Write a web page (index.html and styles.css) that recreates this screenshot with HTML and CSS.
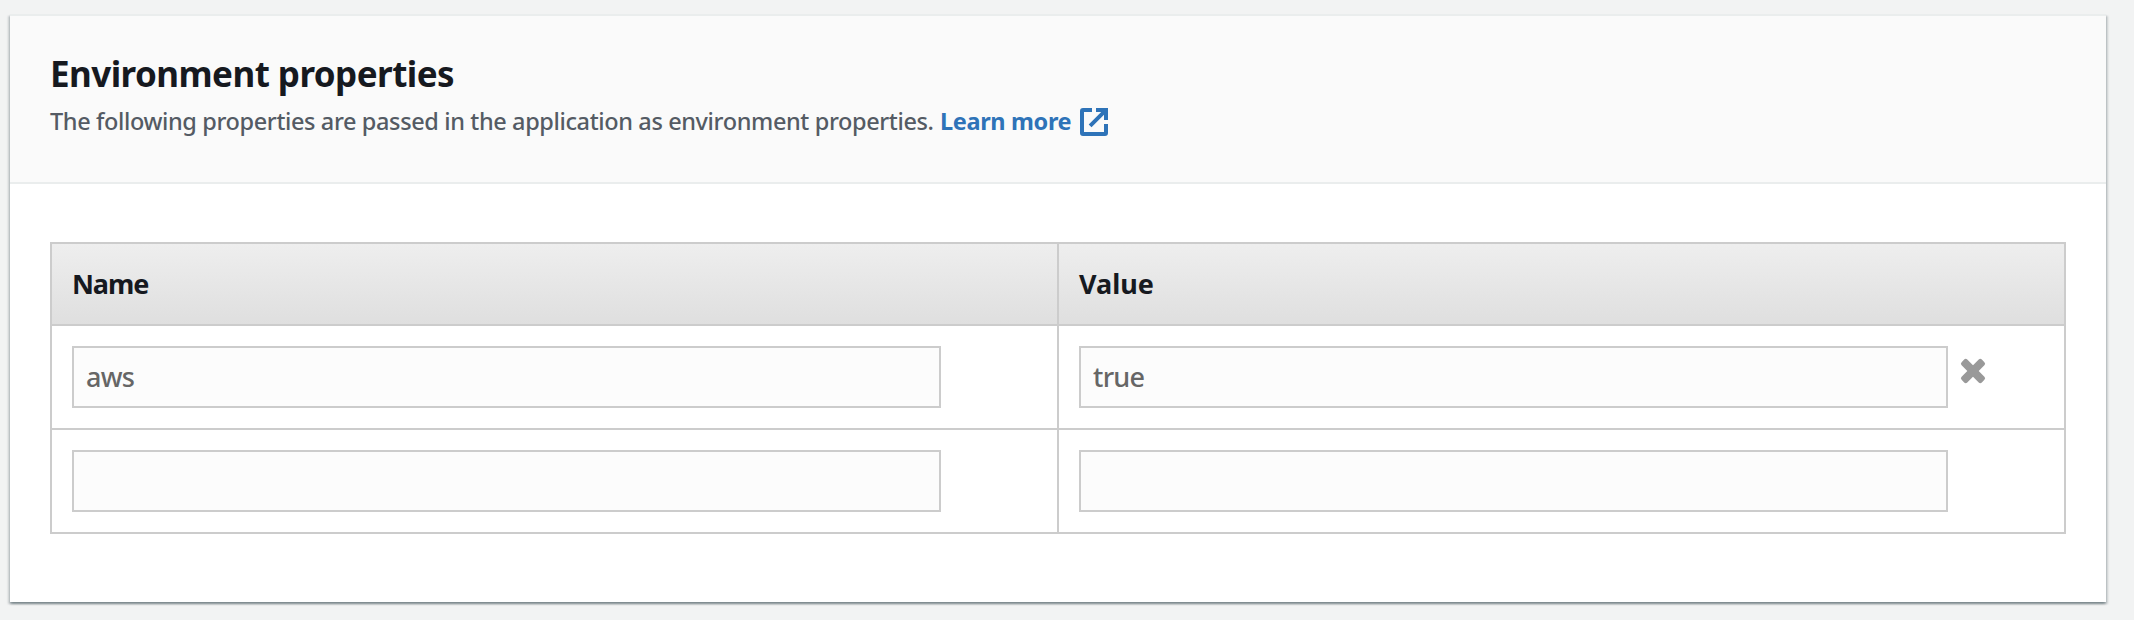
FILE: index.html
```html
<!DOCTYPE html>
<html lang="en">
<head>
<meta charset="utf-8">
<title>Environment properties</title>
<link rel="stylesheet" href="styles.css">
</head>
<body>
<section class="card">
  <header class="card-header">
    <h2 class="title">Environment properties</h2>
    <p class="description"><span class="description-text">The following properties are passed in the application as environment properties.</span><a class="link" href="#">Learn more</a><svg class="external" viewBox="0 0 28 28" aria-hidden="true"><path class="frame" d="M12 2H3Q2 2 2 3V25Q2 26 3 26H25Q26 26 26 25V16" /><path class="arrow" d="M16 0H28V12H24V6.8L11.5 19.3L8.7 16.5L21.2 4H16Z" /></svg></p>
  </header>
  <div class="card-body">
    <table class="properties">
      <thead>
        <tr><th><span class="name-label">Name</span></th><th>Value</th></tr>
      </thead>
      <tbody>
        <tr>
          <td><input class="field" type="text" value="aws" aria-label="Name"></td>
          <td><div class="value-cell"><input class="field" type="text" value="true" aria-label="Value"><svg class="remove" viewBox="-12 -12 24 24" aria-hidden="true"><g transform="rotate(45)"><rect x="-14.3" y="-4" width="28.6" height="8" rx="2.2" /><rect x="-4" y="-14.3" width="8" height="28.6" rx="2.2" /></g></svg></div></td>
        </tr>
        <tr>
          <td><input class="field" type="text" aria-label="Name"></td>
          <td><input class="field" type="text" aria-label="Value"></td>
        </tr>
      </tbody>
    </table>
  </div>
</section>
</body>
</html>
```
FILE: styles.css
```css
* { box-sizing: border-box; }
body {
  margin: 0;
  padding: 14px 28px 18px 10px;
  height: 620px;
  overflow: hidden;
  background: #f2f3f3;
  font-family: "Noto Sans", "Open Sans", sans-serif;
  color: #16191f;
}
.card {
  height: 588px;
  background: #fff;
  border-top: 2px solid #eaeded;
  box-shadow: 0 2px 2px 0 rgba(0, 28, 36, 0.3), 2px 2px 2px 0 rgba(0, 28, 36, 0.15), -2px 2px 2px 0 rgba(0, 28, 36, 0.15);
}
.card-header {
  height: 168px;
  padding: 34px 40px 0;
  background: #fafafa;
  border-bottom: 2px solid #eaeded;
}
.title {
  margin: 0;
  font-size: 35px;
  line-height: 48px;
  font-weight: 700;
  letter-spacing: -0.55px;
  white-space: nowrap;
}
.description {
  display: flex;
  align-items: center;
  margin: 6px 0 0;
  height: 36px;
  font-size: 23.5px;
  line-height: 34px;
  color: #545b64;
  white-space: nowrap;
}
.description-text {
  width: 890px;
  height: 36px;
  font-weight: 500;
  letter-spacing: -0.38px;
}
.link {
  width: 140px;
  height: 36px;
  color: #2e73b8;
  font-weight: 700;
  letter-spacing: -0.35px;
  text-decoration: none;
}
.external {
  width: 28px;
  height: 28px;
}
.frame {
  fill: none;
  stroke: #2e73b8;
  stroke-width: 4;
}
.arrow { fill: #2e73b8; }
.card-body { padding: 58px 40px 0; }
.properties {
  width: 2016px;
  border-collapse: collapse;
  table-layout: fixed;
}
.properties th, .properties td {
  border: 2px solid #ccc;
  padding: 20px;
  text-align: left;
  vertical-align: top;
}
.properties th {
  height: 82px;
  padding: 21px 20px 19px;
  font-size: 27px;
  line-height: 38px;
  background: linear-gradient(#eee, #dfdfdf);
}
.name-label { letter-spacing: -1.1px; }
.properties td { height: 104px; }
.field {
  display: block;
  width: 869px;
  height: 62px;
  margin: 0;
  padding: 0 12px 1px;
  border: 2px solid #ccc;
  border-radius: 0;
  background: #fcfcfc;
  color: #666;
  font: 500 27px "Noto Sans", "Open Sans", sans-serif;
  letter-spacing: -0.7px;
  outline: 0;
}
.value-cell { display: flex; gap: 13px; }
.remove {
  width: 24px;
  height: 24px;
  margin-top: 13px;
  overflow: visible;
  fill: #999;
}
```
